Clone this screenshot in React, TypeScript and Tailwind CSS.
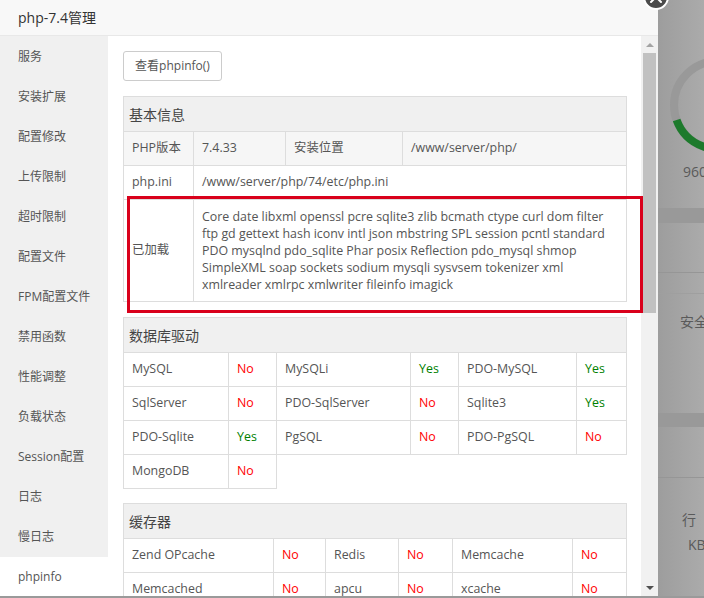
import React from "react";
import clsx from "clsx";

const menu = [
  "服务", "安装扩展", "配置修改", "上传限制", "超时限制", "配置文件", "FPM配置文件",
  "禁用函数", "性能调整", "负载状态", "Session配置", "日志", "慢日志", "phpinfo",
];

const loaded = [
  "Core date libxml openssl pcre sqlite3 zlib bcmath ctype curl dom filter",
  "ftp gd gettext hash iconv intl json mbstring SPL session pcntl standard",
  "PDO mysqlnd pdo_sqlite Phar posix Reflection pdo_mysql shmop",
  "SimpleXML soap sockets sodium mysqli sysvsem tokenizer xml",
  "xmlreader xmlrpc xmlwriter fileinfo imagick",
];

const drivers: [string, boolean][][] = [
  [["MySQL", false], ["MySQLi", true], ["PDO-MySQL", true]],
  [["SqlServer", false], ["PDO-SqlServer", false], ["Sqlite3", true]],
  [["PDO-Sqlite", true], ["PgSQL", false], ["PDO-PgSQL", false]],
  [["MongoDB", false]],
];

const caches: [string, boolean][][] = [
  [["Zend OPcache", false], ["Redis", false], ["Memcache", false]],
  [["Memcached", false], ["apcu", false], ["xcache", false]],
];

function Td({ children, className, colSpan }: { children?: React.ReactNode; className?: string; colSpan?: number }) {
  return (
    <td colSpan={colSpan} className={clsx("border border-[#ddd] px-[8px] h-[34px] align-middle", className)}>
      {children}
    </td>
  );
}

function Status({ ok }: { ok: boolean }) {
  return <Td className={ok ? "text-[#008000]" : "text-[#ff0000]"}>{ok ? "Yes" : "No"}</Td>;
}

function Head({ title, span }: { title: string; span: number }) {
  return (
    <tr>
      <th colSpan={span} className="border border-[#ddd] bg-[#f0f0f0] h-[35px] px-[5px] text-left font-normal text-[14px] text-[#444]">
        {title}
      </th>
    </tr>
  );
}

function StatusTable({ title, widths, rows, className }: { title: string; widths: string[]; rows: [string, boolean][][]; className?: string }) {
  return (
    <table className={clsx("w-[503px] table-fixed border-collapse", className)}>
      <colgroup>
        {widths.map((w, i) => (
          <col key={i} className={w} />
        ))}
      </colgroup>
      <thead>
        <Head title={title} span={6} />
      </thead>
      <tbody>
        {rows.map((row, i) => (
          <tr key={i}>
            {row.map(([name, ok]) => (
              <React.Fragment key={name}>
                <Td>{name}</Td>
                <Status ok={ok} />
              </React.Fragment>
            ))}
          </tr>
        ))}
      </tbody>
    </table>
  );
}

function Backdrop() {
  return (
    <div className="flex-1 h-[596px] flex flex-col overflow-hidden whitespace-nowrap bg-gradient-to-r from-[#9d9d9d] to-[#ababab] text-[14px] leading-[20px] text-[#5a5a5a]">
      <div className="h-[50px]" />
      <svg width="46" height="110" viewBox="0 0 46 110" className="shrink-0">
        <circle cx="60" cy="55" r="44" fill="none" stroke="#999999" strokeWidth="8" />
        <path d="M18.6 70 A44 44 0 0 0 82 93.1" fill="none" stroke="#1d7a2c" strokeWidth="8" />
      </svg>
      <div className="pl-[25px] mt-[2px]">960</div>
      <div className="h-[26px]" />
      <div className="h-[15px] bg-[#999999]" />
      <div className="h-[49px]" />
      <div className="h-px bg-[#969696]" />
      <div className="h-[20px]" />
      <div className="h-px bg-[#9f9f9f]" />
      <div className="h-[18px]" />
      <div className="pl-[22px]">安全</div>
      <div className="h-[81px]" />
      <div className="h-[14px] bg-[#999999]" />
      <div className="h-[50px]" />
      <div className="h-px bg-[#969696]" />
      <div className="h-[32px]" />
      <div className="pl-[24px]">行</div>
      <div className="pl-[30px] mt-[5px]">KB</div>
    </div>
  );
}

export default function App() {
  return (
    <div className="w-[704px] h-[598px] flex items-start bg-[#9a9a9a] overflow-hidden font-['Open_Sans','Noto_Sans_CJK_SC',sans-serif]">
      <div className="relative z-10 w-[658px] h-[596px] bg-white flex flex-col">
        {/* title bar */}
        <div className="h-[36px] shrink-0 bg-[#f8f8f8] border-b border-[#e8e8e8] flex items-center pl-[18px] text-[14px] text-[#333]">
          php-7.4管理
        </div>
        <div className="flex flex-1 min-h-0">
          {/* sidebar */}
          <div className="w-[108px] shrink-0 bg-[#f0f0f0] flex flex-col pt-[1px] overflow-hidden">
            {menu.map((m) => (
              <div
                key={m}
                className={clsx("h-[40px] shrink-0 flex items-center pl-[18px] text-[12px] text-[#555]", m === "phpinfo" && "bg-white")}
              >
                {m}
              </div>
            ))}
          </div>
          {/* content */}
          <div className="flex-1 overflow-hidden pt-[15px] pl-[15px] text-[12.4px] text-[#555]">
            <button className="h-[30px] w-[99px] border border-[#ccc] rounded-[3px] bg-white text-[12px] text-[#555]">
              查看phpinfo()
            </button>
            <table className="mt-[15px] w-[503px] table-fixed border-collapse">
              <colgroup>
                <col className="w-[70px]" />
                <col className="w-[92px]" />
                <col className="w-[117px]" />
                <col className="w-[224px]" />
              </colgroup>
              <thead>
                <Head title="基本信息" span={4} />
              </thead>
              <tbody>
                <tr className="bg-[#f6f6f6]">
                  <Td>PHP版本</Td>
                  <Td>7.4.33</Td>
                  <Td>安装位置</Td>
                  <Td>/www/server/php/</Td>
                </tr>
                <tr>
                  <Td className="h-[33px]">php.ini</Td>
                  <Td colSpan={3} className="h-[33px]">/www/server/php/74/etc/php.ini</Td>
                </tr>
                <tr>
                  <Td>已加载</Td>
                  <Td colSpan={3} className="py-[8px] leading-[17px]">
                    {loaded.map((l) => (
                      <div key={l} className="whitespace-nowrap">{l}</div>
                    ))}
                  </Td>
                </tr>
              </tbody>
            </table>
            <StatusTable
              className="mt-[15px]"
              title="数据库驱动"
              widths={["w-[105px]", "w-[48px]", "w-[134px]", "w-[48px]", "w-[118px]", "w-[50px]"]}
              rows={drivers}
            />
            <StatusTable
              className="mt-[14px]"
              title="缓存器"
              widths={["w-[150px]", "w-[52px]", "w-[73px]", "w-[54px]", "w-[120px]", "w-[54px]"]}
              rows={caches}
            />
          </div>
          {/* scrollbar */}
          <div className="w-[17px] shrink-0 bg-[#f1f1f1] flex flex-col items-center">
            <div className="h-[17px] w-full flex items-center justify-center">
              <div className="w-0 h-0 border-x-[4px] border-x-transparent border-b-[4px] border-b-[#a3a3a3]" />
            </div>
            <div className="w-[13px] h-[260px] bg-[#c1c1c1]" />
            <div className="flex-1" />
            <div className="h-[17px] w-full flex items-center justify-center">
              <div className="w-0 h-0 border-x-[4px] border-x-transparent border-t-[4px] border-t-[#505050]" />
            </div>
          </div>
        </div>
        {/* annotation box */}
        <div className="absolute left-[127px] top-[196px] w-[516px] h-[117px] border-[3px] border-[#d9001b] pointer-events-none" />
        {/* close button */}
        <div className="absolute left-[643px] top-[-16px] w-[26px] h-[26px] rounded-full bg-[#4b4b4b] border-2 border-white flex items-center justify-center">
          <svg width="14" height="14" viewBox="0 0 14 14">
            <path d="M2 2 L12 12 M12 2 L2 12" stroke="white" strokeWidth="2" strokeLinecap="round" />
          </svg>
        </div>
      </div>
      <Backdrop />
    </div>
  );
}
